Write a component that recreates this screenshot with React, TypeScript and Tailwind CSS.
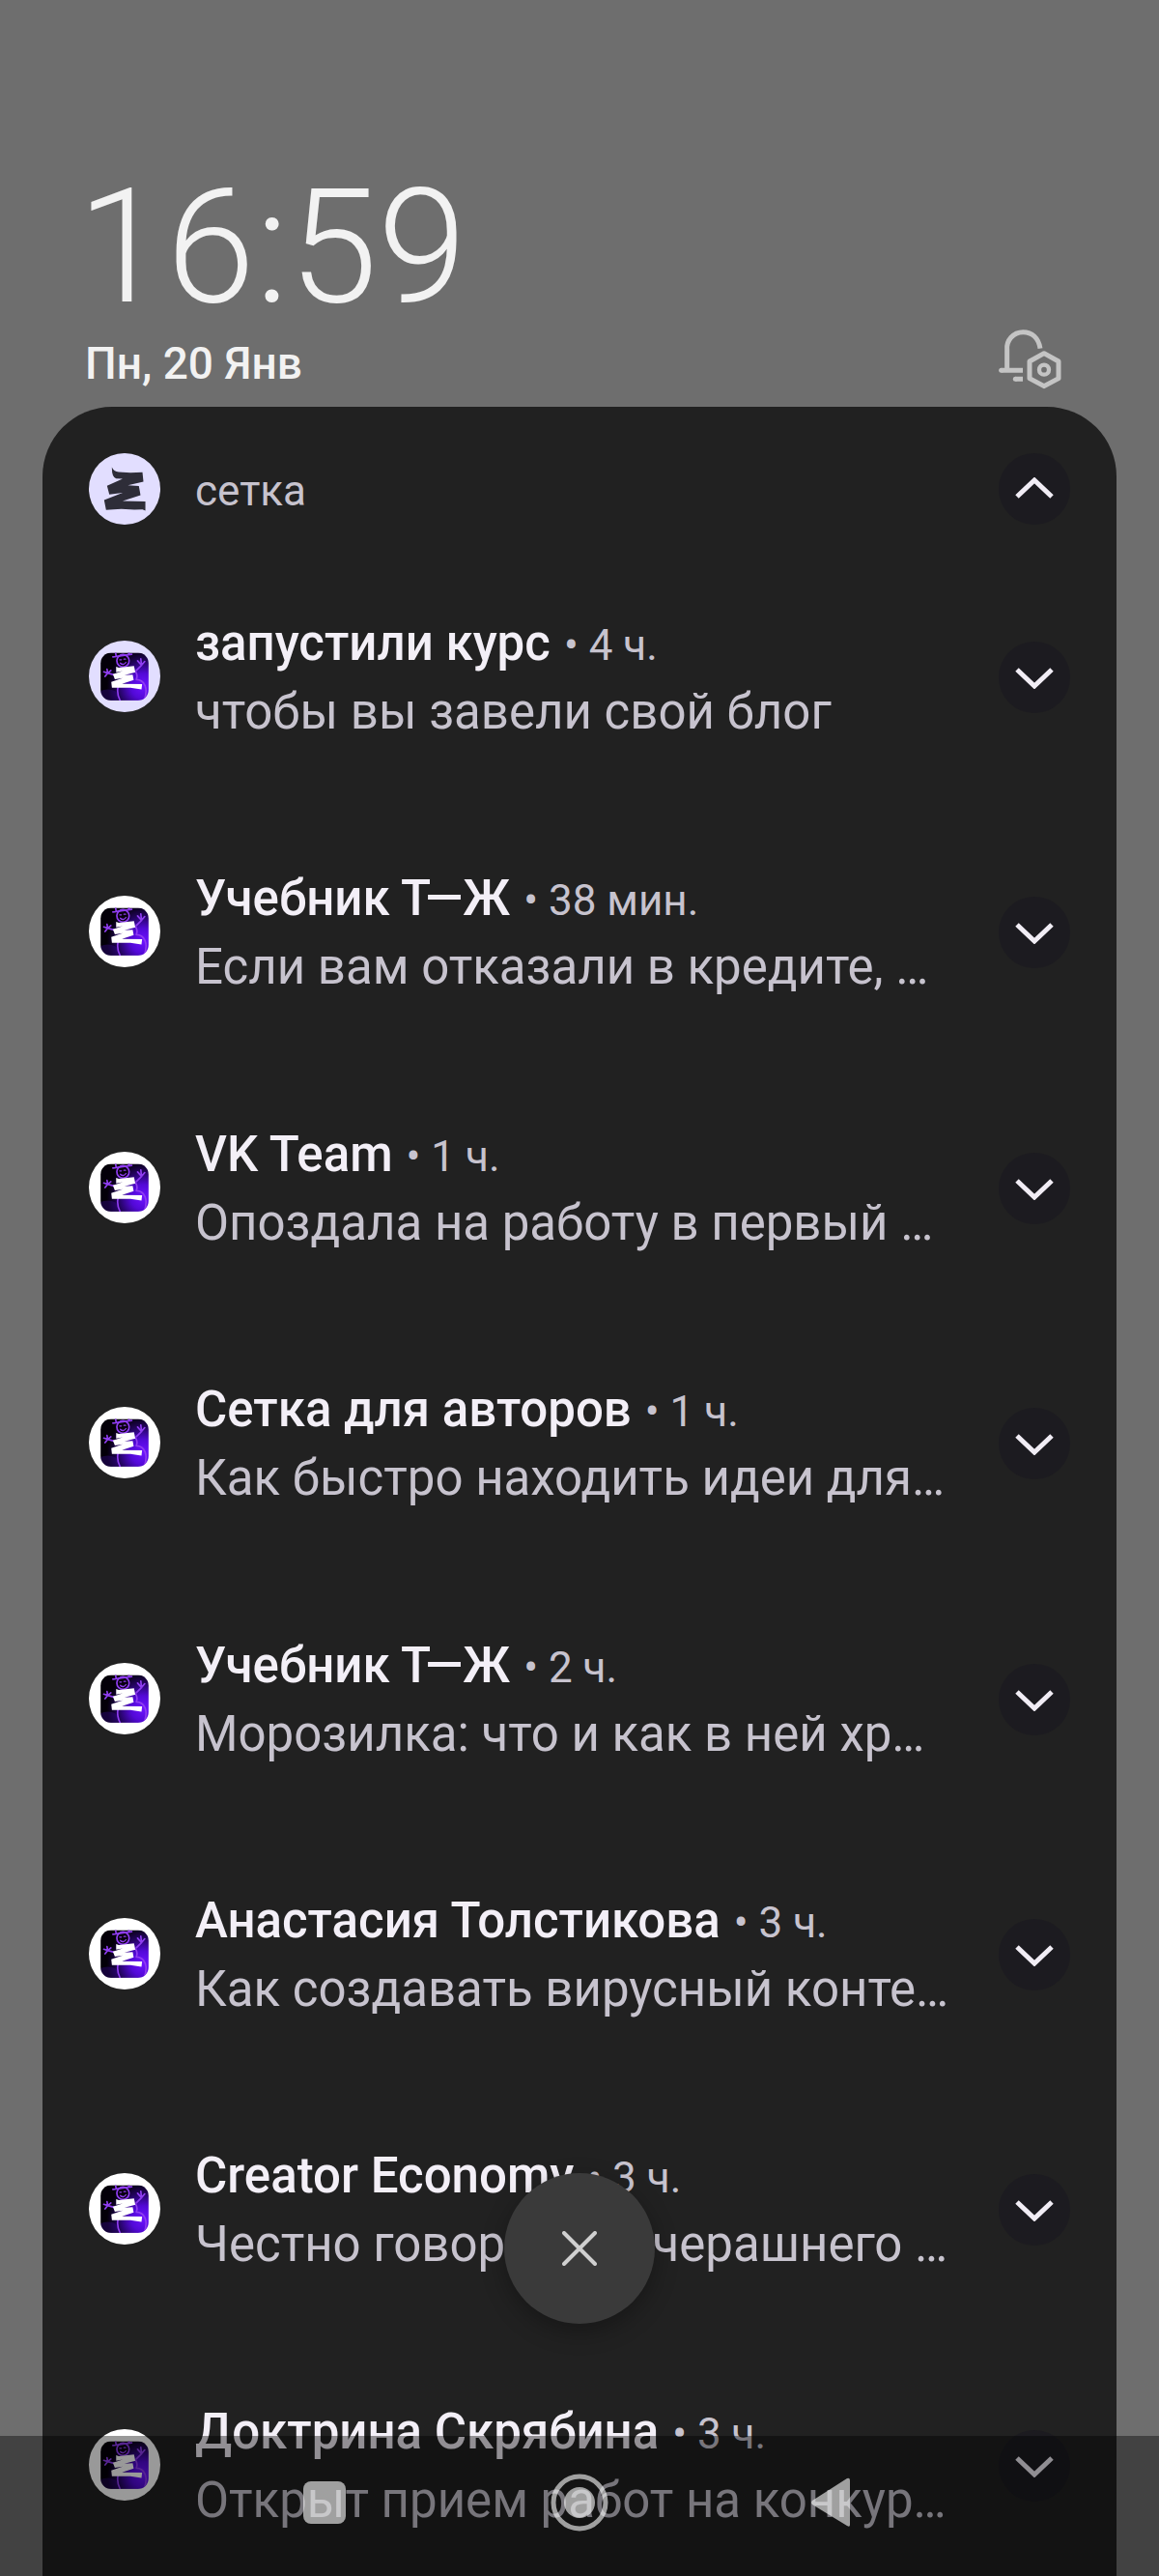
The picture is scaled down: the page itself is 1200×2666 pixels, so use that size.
import React from "react";

type Notice = { title: string; time: string; text: string; tinted?: boolean };

const notices: Notice[] = [
  { title: "запустили курс", time: "4 ч.", text: "чтобы вы завели свой блог", tinted: true },
  { title: "Учебник Т—Ж", time: "38 мин.", text: "Если вам отказали в кредите, …" },
  { title: "VK Team", time: "1 ч.", text: "Опоздала на работу в первый …" },
  { title: "Сетка для авторов", time: "1 ч.", text: "Как быстро находить идеи для…" },
  { title: "Учебник Т—Ж", time: "2 ч.", text: "Морозилка: что и как в ней хр…" },
  { title: "Анастасия Толстикова", time: "3 ч.", text: "Как создавать вирусный конте…" },
  { title: "Creator Economy", time: "3 ч.", text: "Честно говоря, до вчерашнего …" },
  { title: "Доктрина Скрябина", time: "3 ч.", text: "Открыт прием работ на конкур…" },
];

function BellSettingsIcon() {
  return (
    <svg viewBox="0 0 198 186" className="h-[62px] w-[66px]" fill="none" stroke="#c4c4c4" strokeWidth="15">
      <path d="M26 127V64a50 50 0 0 1 50-56c27 0 48 18 53 51" />
      <path d="M8 127H75M52 154H75" />
      <circle cx="8" cy="127" r="7.500" fill="#c4c4c4" stroke="none" />
      <circle cx="52" cy="154" r="7.500" fill="#c4c4c4" stroke="none" />
      <path d="M141 74L186 99V152L141 176L96 152V99Z" strokeLinejoin="round" />
      <circle cx="141" cy="125" r="15" strokeWidth="13" />
    </svg>
  );
}

function AppMark() {
  return (
    <svg viewBox="0 0 220 220" className="size-[74px] shrink-0" aria-hidden="true">
      <circle cx="110" cy="110" r="110" fill="#e2deff" />
      <path
        fill="#2e2d38"
        d="M71 43Q76 56 92 58L128 60L165 59L168 88L120 99L154 101L159 129L104 147L140 148L174 149L174 177L165 173L140 174L100 172L53 175L47 144L104 122L63 127L56 100L104 79L84 78Q70 74 71 43Z"
      />
    </svg>
  );
}

function Avatar({ tinted }: { tinted?: boolean }) {
  return (
    <svg viewBox="0 0 220 220" className="size-[74px] shrink-0" aria-hidden="true">
      <defs>
        <radialGradient id="tile-glow" gradientUnits="userSpaceOnUse" cx="168" cy="140" r="112">
          <stop offset="0" stopColor="#6d12ff" />
          <stop offset="0.35" stopColor="#5209d6" />
          <stop offset="0.7" stopColor="#22045c" />
          <stop offset="1" stopColor="#040009" />
        </radialGradient>
        <clipPath id="tile-clip">
          <rect x="36" y="37" width="148" height="147" rx="33" />
        </clipPath>
      </defs>
      <circle cx="110" cy="110" r="110" fill={tinted ? "#e2deff" : "#ffffff"} />
      <g clipPath="url(#tile-clip)">
        <rect x="36" y="37" width="148" height="147" fill="url(#tile-glow)" />
        <ellipse cx="58" cy="172" rx="34" ry="22" fill="#3a0a9c" opacity="0.35" />
        <g fill="none" stroke="#8f3df0" strokeWidth="5" strokeLinecap="round" strokeLinejoin="round">
          <path d="M144 96C152 108 148 112 146 120C172 120 184 148 170 184" />
          <path d="M90 142C86 158 90 172 96 184" />
          <path d="M146 92L162 76M162 76L150 62M162 76L160 56M162 76L172 64" />
          <path d="M80 106L58 100M58 100L46 96M58 100L56 88M58 100L50 110M58 100L68 92" />
          <circle cx="105" cy="62" r="19" fill="#08000f" />
          <path d="M74 50L132 42M84 48L82 36M124 43L122 34" />
          <path d="M95 59h5M108 57h5M97 69C102 75 110 74 114 67" strokeWidth="4" />
        </g>
        <path
          fill="#ffffff"
          d="M84 80L92 83L139 78L143 97L110 106L135 105L138 121L102 133L164 134L162 150L128 145L71 145L69 127L104 115L80 119L74 103L104 94L84 97Z"
        />
      </g>
    </svg>
  );
}

function ToggleButton({ open, label }: { open?: boolean; label: string }) {
  return (
    <button
      type="button"
      aria-label={label}
      aria-expanded={!!open}
      className="grid size-[74px] shrink-0 place-items-center rounded-full bg-[#1c1b20]"
    >
      <svg viewBox="0 0 40 24" className="h-6 w-10" fill="none" stroke="#f1edf5" strokeWidth="5">
        <path d={open ? "M2 20L20 3L38 20" : "M2 4L20 21L38 4"} />
      </svg>
    </button>
  );
}

export default function App() {
  return (
    <main className="relative flex min-h-screen flex-col bg-[#6e6e6e] font-['Roboto',sans-serif]">
      <header className="flex items-end justify-between px-[88px] pt-[173px] pb-[18px] text-[#f2f2f2]">
        <div>
          <h1 className="-ml-2 text-[166px] leading-[166px] font-light">16:59</h1>
          <p className="mt-2.5 text-[46px] leading-[54px] font-medium">Пн, 20 Янв</p>
        </div>
        <button type="button" aria-label="Настройки уведомлений" className="mr-3">
          <BellSettingsIcon />
        </button>
      </header>

      <section className="mx-11 flex flex-1 flex-col rounded-t-[72px] bg-[#212121] px-12">
        <div className="flex items-center gap-9 pt-12 pb-2">
          <AppMark />
          <h2 className="flex-1 pt-1 text-[44px] leading-[70px] text-[#c7c3ce]">сетка</h2>
          <ToggleButton open label="Свернуть группу" />
        </div>

        <ul className="grid flex-1 auto-rows-fr">
          {notices.map((n) => (
            <li key={n.title + n.time} className="flex items-start gap-9 pt-[79px]">
              <div className="flex h-[140px] items-center">
                <Avatar tinted={n.tinted} />
              </div>
              <div className="min-w-0 flex-1 whitespace-nowrap">
                <div className="flex items-baseline gap-3.5">
                  <h3 className="text-[51px] leading-[71px] font-medium text-[#f3eff7]">{n.title}</h3>
                  <span className="text-[44px] leading-none text-[#c7c3ce]">• {n.time}</span>
                </div>
                <p className="text-[51px] leading-[71px] text-[#c7c3ce]">{n.text}</p>
              </div>
              <div className="flex h-[142px] items-center">
                <ToggleButton label={"Развернуть: " + n.title} />
              </div>
            </li>
          ))}
        </ul>
      </section>

      <button
        type="button"
        aria-label="Очистить все"
        className="absolute bottom-[261px] left-1/2 grid size-[156px] -translate-x-1/2 place-items-center rounded-full bg-[#3a3a3a] shadow-[0_8px_24px_rgba(0,0,0,0.3)]"
      >
        <svg viewBox="0 0 36 36" className="size-9" fill="none" stroke="#d0d0d0" strokeWidth="4" strokeLinecap="round">
          <path d="M2 2L34 34M34 2L2 34" />
        </svg>
      </button>

      <nav className="absolute inset-x-0 bottom-0 flex h-[145px] justify-center bg-black/40 pb-2 text-white/60">
        <button type="button" aria-label="Недавние" className="grid w-[22%] place-items-center">
          <span className="size-11 rounded-lg bg-current" />
        </button>
        <button type="button" aria-label="Домой" className="grid w-[22%] place-items-center">
          <svg viewBox="0 0 60 60" className="size-[60px]">
            <circle cx="30" cy="30" r="27" fill="none" stroke="currentColor" strokeWidth="5" />
            <circle cx="30" cy="30" r="16" fill="currentColor" />
          </svg>
        </button>
        <button type="button" aria-label="Назад" className="grid w-[22%] place-items-center">
          <svg viewBox="0 0 50 52" className="h-[52px] w-[50px]">
            <path d="M2 24L38 1Q41 0 41 3V49Q41 52 38 50L2 28Q0 26 2 24Z" fill="currentColor" />
          </svg>
        </button>
      </nav>
    </main>
  );
}
